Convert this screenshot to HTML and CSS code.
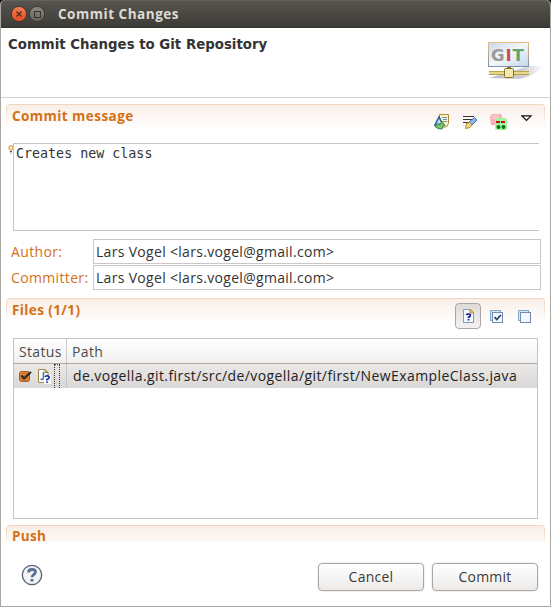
FILE: index.html
```html
<!DOCTYPE html>
<html lang="en">
<head>
<meta charset="utf-8">
<title>Commit Changes</title>
<link rel="stylesheet" href="styles.css">
</head>
<body>
<div class="window">
  <header class="titlebar">
    <svg class="window-controls" width="34" height="16" viewBox="0 0 34 16">
      <defs>
        <linearGradient id="close" x2="0" y2="1"><stop stop-color="#f58058"/><stop offset="1" stop-color="#df4a1c"/></linearGradient>
        <linearGradient id="max" x2="0" y2="1"><stop stop-color="#8b897f"/><stop offset="1" stop-color="#64625b"/></linearGradient>
      </defs>
      <circle cx="8" cy="8" r="7.600" fill="url(#close)" stroke="#34322d" stroke-width=".8"/>
      <path d="M5.500 5.500l5 5M10.500 5.500l-5 5" stroke="#45261b" stroke-width="1.2"/>
      <circle cx="26" cy="8" r="7.600" fill="url(#max)" stroke="#34322d" stroke-width=".8"/>
      <rect x="23.500" y="5.500" width="6" height="6" fill="none" stroke="#35342f"/>
    </svg>
    <h1 class="window-title"><span>Commit Changes</span></h1>
  </header>
  <div class="banner">
    <h2 class="banner-title">Commit Changes to Git Repository</h2>
    <svg class="git-logo" width="60" height="44" viewBox="0 0 60 44">
      <defs>
        <linearGradient id="screen" x2="1" y2="1"><stop stop-color="#c9d9ee"/><stop offset=".5" stop-color="#f4f7fb"/><stop offset="1" stop-color="#c3d4eb"/></linearGradient>
        <linearGradient id="frame" x2="0" y2="1"><stop stop-color="#e8bd83"/><stop offset="1" stop-color="#7794ab"/></linearGradient>
        <linearGradient id="shade"><stop stop-color="#c0bdcb"/><stop offset=".6" stop-color="#cfccd8"/><stop offset="1" stop-color="#fff"/></linearGradient>
        <linearGradient id="wire" x2="0" y2="1"><stop stop-color="#a39031"/><stop offset=".5" stop-color="#fff3a8"/><stop offset="1" stop-color="#9a862a"/></linearGradient>
      </defs>
      <path d="M3 37L43 25Q58 24 58 26Q48 35 34 38Z" fill="url(#shade)"/>
      <rect x="2.500" y="1.500" width="40" height="24" fill="url(#screen)" stroke="url(#frame)"/>
      <g class="logo-letters"><text x="5" y="20" fill="#999">G</text><text x="19.500" y="20" fill="#cb4b55">I</text><text x="26.500" y="20" fill="#5ca66c">T</text></g>
      <rect x="21" y="26" width="4" height="3" fill="#777044"/>
      <rect x="3" y="30" width="40" height="4" fill="url(#wire)"/>
      <rect x="18.500" y="27.500" width="9" height="9" rx="1" fill="#f4e9ac" stroke="#857323"/>
    </svg>
  </div>
  <main class="content">
    <section class="message-section">
      <div class="section-head">
        <h3>Commit message</h3>
        <div class="message-tools">
          <svg width="16" height="16" viewBox="0 0 16 16">
            <path d="M5.500 .500h9v9l-2 3.500H5.500z" fill="#fff4bd" stroke="#b08a3c"/>
            <path d="M8 3.500h5M9 5.500h4M9 7.500h4" stroke="#6f8cb5"/>
            <path d="M1 11L5 3l3.500 7z" fill="#c9e2ee" stroke="#22639a" stroke-width="1.600"/>
            <path d="M1 12.500l3-3 1.500 1.500L8 7.500l3 4-2 .5-1 3-4-.5z" fill="#7cc36a" stroke="#37804a"/>
          </svg>
          <svg width="16" height="16" viewBox="0 0 16 16">
            <path d="M1 2.500h11M1 5.500h10M1 8.500h7" stroke="#343434"/>
            <path d="M7 8l5.500-4.500 2.500 2.500-5 5z" fill="#8db5e9" stroke="#4774ae"/>
            <path d="M4.500 9.500l3-1 2.500 2.500-2 2.500-4.500 1z" fill="#f3d67a" stroke="#b98b26"/>
          </svg>
          <svg width="17" height="17" viewBox="0 0 17 17">
            <path d="M2 0h9l1 3-1 8H1L0 3z" fill="#f8aeb2"/>
            <path d="M2 1h7v4H1z" fill="#fac6c7"/>
            <rect x="5" y="4" width="12" height="12" rx="1.500" fill="#a2f69f"/>
            <path d="M6 8h4M11 8h4" stroke="#c40d17" stroke-width="2"/>
            <circle cx="8.500" cy="13" r="2" fill="#08751c"/><circle cx="13.500" cy="13" r="2" fill="#08751c"/>
          </svg>
          <svg class="menu-arrow" width="12" height="7" viewBox="0 0 12 7"><path d="M1 .8h9L5.500 5.300z" fill="#fff" stroke="#111" stroke-width="1.200"/></svg>
        </div>
      </div>
      <div class="message-row">
        <svg width="6" height="9" viewBox="0 0 6 9"><circle cx="3" cy="3" r="2.200" fill="#fff6c1" stroke="#d88418"/><path d="M2 6.500h2M2.500 8h1" stroke="#495360"/></svg>
        <div class="message-box">Creates new class</div>
      </div>
    </section>
    <div class="fields">
      <span class="label author">Author:</span><div class="input"><span>Lars Vogel &lt;lars.vogel@gmail.com&gt;</span></div>
      <span class="label committer">Committer:</span><div class="input"><span>Lars Vogel &lt;lars.vogel@gmail.com&gt;</span></div>
    </div>
    <section class="files-section">
      <div class="section-head">
        <h3 class="files-title">Files (1/1)</h3>
        <div class="file-tools">
          <span class="toggle"><svg width="11" height="14" viewBox="0 0 11 14"><path d="M.5.500h7l3 3v10H.5z" fill="#f5faff" stroke="#8298bd"/><path d="M7 0v4h4z" fill="#e5bd68" stroke="#b98d3f"/><path d="M3.500 6Q4 4.800 5.500 5q2 .1 1.800 1.600Q7.300 8 5.500 8.300V9M5.500 10v1.500" fill="none" stroke="#101d98" stroke-width="1.700"/></svg></span>
          <svg width="13" height="13" viewBox="0 0 13 13"><rect x=".5" y=".5" width="10" height="10" fill="#d3e7f4" stroke="#83a9c7"/><rect x="2.500" y="2.500" width="10" height="10" fill="#f1f8ff" stroke="#7889ab"/><path d="M4.500 7l2.200 2.500L11 5" fill="none" stroke="#243e5c" stroke-width="1.600"/></svg>
          <svg width="13" height="13" viewBox="0 0 13 13"><rect x=".5" y=".5" width="10" height="10" fill="#d3e7f4" stroke="#83a9c7"/><rect x="2.500" y="2.500" width="10" height="10" fill="#f2f8ff" stroke="#7889ab"/></svg>
        </div>
      </div>
      <div class="files-table">
        <div class="table-row table-header"><span class="cell status-head"><span>Status</span></span><span class="cell path-head"><span>Path</span></span></div>
        <div class="table-row file-row">
          <span class="cell status-cell">
            <svg width="13" height="12" viewBox="0 0 13 12"><rect x=".5" y="1.500" width="10" height="10" rx="2" fill="#dc7a32" stroke="#a85c2c"/><path d="M2.500 5.500L5 8.500 12 2" fill="none" stroke="#292b2b" stroke-width="2"/></svg>
            <svg width="13" height="15" viewBox="0 0 13 15"><path d="M.500 .5h6.500l3 3v10H.5z" fill="#f4faff" stroke="#a68744"/><path d="M7 .5v3h3z" fill="#efc878" stroke="#a68744"/><path d="M5.500 3v6q0 2-3 1" fill="none" stroke="#3c78a8" stroke-width="1.600"/><rect x="6" y="6" width="7" height="9" fill="#fff"/><path d="M7 8q.5-1.500 2.500-1.200 2 .2 1.500 2Q11 10 9 10.500v1M9 12.500V14" fill="none" stroke="#1527a2" stroke-width="1.700"/></svg>
            <span class="focus"></span>
          </span>
          <span class="cell path-cell"><span>de.vogella.git.first/src/de/vogella/git/first/NewExampleClass.java</span></span>
        </div>
      </div>
    </section>
    <section class="push-section"><div class="section-head"><h3 class="push-title">Push</h3></div></section>
  </main>
  <footer>
    <svg width="22" height="22" viewBox="0 0 22 22"><circle cx="11" cy="11" r="9.700" fill="#f4f4f4" stroke="#53657e" stroke-width="1.300"/><path d="M7.500 8.500Q7.500 5.500 11 5.500q3.700 0 3.500 2.700c0 2-3.500 2.300-3.500 5" fill="none" stroke="#587096" stroke-width="2.800"/><rect x="9.500" y="15" width="3" height="2.500" fill="#587096"/></svg>
    <div class="actions"><button class="cancel"><span>Cancel</span></button><button class="commit"><span>Commit</span></button></div>
  </footer>
</div>
</body>
</html>
```

FILE: styles.css
```css
* { box-sizing: border-box; }
body { margin: 0; background: #111; font: 14px/18px "Open Sans", "Noto Sans", sans-serif; color: #333; }
h1, h2, h3 { margin: 0; font-weight: 700; }
svg { display: block; flex: none; }
.window { width: 551px; height: 607px; display: flex; flex-direction: column; border: 1px solid #aaa6a2; border-top: 0; border-radius: 5px 5px 0 0; overflow: hidden; background: #fff; }
.titlebar { height: 28px; flex: none; margin: 0 -1px; padding-left: 11px; display: flex; align-items: center; gap: 13px; background: linear-gradient(#57554f, #3c3b37); border-top: 1px solid #64625c; border-bottom: 1px solid #34332f; }
.window-title { color: #dfdbd2; font-size: 13.5px; letter-spacing: .52px; white-space: nowrap; }
.banner { height: 70px; flex: none; border-bottom: 1px solid #d5d2d0; display: flex; justify-content: space-between; padding: 8px 4px 0 7px; }
.banner-title { font: bold 13.33px/18px "DejaVu Sans", sans-serif; white-space: nowrap; }
.git-logo { margin-top: 5px; }
.logo-letters { font: bold 16.5px "DejaVu Sans", sans-serif; }
.content { padding: 6px 5px 0; height: 444px; flex: none; }
.section-head { height: 25px; display: flex; justify-content: space-between; padding: 2px 8px 0 6px; border-top: 1px solid #f0d6be; border-radius: 4px; background: linear-gradient(#f9eee7, #fff); position: relative; }
.section-head::before, .section-head::after { content: ""; position: absolute; top: 2px; width: 1px; height: 21px; background: linear-gradient(#f2d5bb, #fff); }
.section-head::before { left: 0; }
.section-head::after { right: 0; }
h3 { color: #d47016; font-size: 13.5px; line-height: 18px; letter-spacing: .45px; white-space: nowrap; }
.message-section { height: 135px; }
.message-tools { height: 24px; padding-top: 7px; display: flex; gap: 12px; margin-right: 6px; }
.message-tools .menu-arrow { margin: 1px -2px 0 2px; }
.message-row { display: flex; margin: 14px 6px 0 2px; }
.message-row > svg { margin-top: 2px; margin-right: -1px; }
.message-box { flex: 1; height: 88px; border: 1px solid #c6c5c4; border-right: 0; padding: 2px; font: 13.33px/16px "DejaVu Sans Mono", monospace; }
.fields { display: grid; grid-template-columns: 82px 448px; grid-template-rows: 26px 26px; padding-left: 5px; }
.label { color: #d47016; padding-top: 4px; white-space: nowrap; letter-spacing: .35px; }
.input { height: 25px; border: 1px solid #c9c8c7; padding: 3px 2px; white-space: nowrap; letter-spacing: .31px; }
.files-section { margin-top: 7px; height: 227px; }
.files-title { letter-spacing: .4px; }
.file-tools { display: flex; align-items: center; gap: 15px; height: 26px; margin-top: 2px; margin-right: 6px; }
.toggle { width: 26px; height: 26px; border: 1px solid #aaa7a3; border-radius: 4px; background: linear-gradient(#dedbd8, #f4f2f1); display: grid; place-items: center; margin-right: -6px; }
.files-table { margin: 15px 7px 0; height: 181px; border: 1px solid #c5c4c3; }
.table-row { display: grid; grid-template-columns: 53px 1fr; }
.table-header { height: 25px; background: linear-gradient(#fff, #f1f0ef); border-bottom: 1px solid #aaa7a4; color: #4c4c4c; }
.cell { white-space: nowrap; display: flex; align-items: center; padding-top: 1px; letter-spacing: .35px; }
.status-head { border-right: 1px solid #cbc9c7; padding-left: 5px; }
.path-head { padding-left: 5px; }
.file-row { height: 24px; background: linear-gradient(#eae9e8, #dad8d6); }
.status-cell { padding: 0 0 0 5px; gap: 6px; border-right: 1px solid #c8c6c4; }
.focus { width: 6px; height: 24px; border: 1px dotted #333; border-bottom: 0; margin-left: -3px; }
.path-cell { padding: 0 0 0 6px; color: #222; letter-spacing: .41px; }
.push-section { height: 17px; overflow: hidden; }
.push-section .section-head { height: 17px; padding-top: 1px; background: linear-gradient(#f9eee7, #fcf8f5); }
.push-title { line-height: 19px; letter-spacing: .3px; }
footer { flex: 1; display: flex; justify-content: space-between; padding: 21px 12px 0 20px; }
.actions { display: flex; gap: 8px; }
footer > svg { margin-top: 1px; }
button { width: 106px; height: 28px; padding: 0; border: 1px solid #aaa7a4; border-radius: 4px; background: linear-gradient(#fff, #ecebea); box-shadow: 0 0 0 1px #f2f1f0; font: inherit; letter-spacing: .25px; color: #3a3a3a; }
.cancel, .commit { flex: none; }
```
